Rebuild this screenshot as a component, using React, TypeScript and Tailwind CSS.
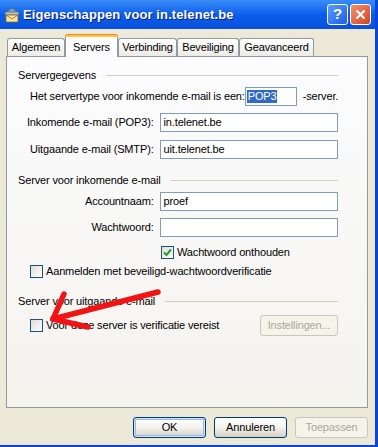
import React from "react";

const font = { fontFamily: '"Liberation Sans", Arial, sans-serif' };

function Input({ value, w = "w-[179px]" }: { value?: string; w?: string }) {
  return (
    <div className={`${w} h-[19px] border border-[#7F9DB9] bg-white flex items-center px-[3px] text-[11px] text-black`}>
      {value}
    </div>
  );
}

function Check({ checked }: { checked?: boolean }) {
  return (
    <div className="w-[13px] h-[13px] border border-[#1C5180] bg-gradient-to-br from-[#DCDCD7] to-[#FFFFFF] flex items-center justify-center shrink-0">
      {checked && (
        <svg width="9" height="9" viewBox="0 0 9 9">
          <path d="M1 4.5 L3.5 7 L8 1.5" stroke="#21A121" strokeWidth="2" fill="none" />
        </svg>
      )}
    </div>
  );
}

function Section({ title, className = "" }: { title: string; className?: string }) {
  return (
    <div className={`flex items-center h-[14px] ${className}`}>
      <span className="text-[11px] text-black whitespace-nowrap">{title}</span>
      <div className="flex-1 ml-[10px] h-px bg-[#D0D0BF]" />
    </div>
  );
}

function Btn({ label, def, disabled, w = "w-[73px]" }: { label: string; def?: boolean; disabled?: boolean; w?: string }) {
  const border = disabled ? "border-[#C9C7BA]" : "border-[#003C74]";
  return (
    <div
      className={`${w} h-[21px] rounded-[3px] border ${border} flex items-center justify-center text-[11px] ${
        disabled ? "text-[#ACA899] bg-[#F5F4EA]" : "text-black bg-gradient-to-b from-[#FFFFFF] via-[#F4F3EE] to-[#D6D0C5]"
      } ${def ? "shadow-[inset_0_0_0_1px_#CEE7FF,inset_0_0_0_2px_#98B8EA]" : ""}`}
    >
      {label}
    </div>
  );
}

function Tab({ label, w, selected }: { label: string; w: string; selected?: boolean }) {
  if (selected) {
    return (
      <div
        className={`${w} h-[23px] relative z-10 -mb-px rounded-t-[3px] border-x border-[#919B9C] bg-[#FCFCFE] flex items-start justify-center pt-[4px] text-[11px] text-black`}
      >
        <div className="absolute left-[-1px] right-[-1px] top-0 h-[3px] rounded-t-[3px] bg-[#FFC83C] border-t border-[#E68B2C]" />
        <span className="mt-[1px]">{label}</span>
      </div>
    );
  }
  return (
    <div
      className={`${w} h-[18px] rounded-t-[3px] border border-b-0 border-[#919B9C] bg-gradient-to-b from-[#FFFFFF] to-[#ECEBE6] flex items-center justify-center text-[11px] text-black`}
    >
      {label}
    </div>
  );
}

export default function App() {
  return (
    <div className="relative w-[378px] h-[447px] overflow-hidden bg-[#0A45D8] tracking-[-0.15px]" style={font}>
      <div className="flex flex-col w-[375px] h-[445px]">
        {/* title bar */}
        <div className="h-[29px] shrink-0 bg-gradient-to-b from-[#3A8CFA] via-[#0A5EEA] to-[#0850DC] flex items-center pl-[3px] pr-[4px]">
          <svg width="18" height="16" viewBox="0 0 18 16" className="mr-[2px] mt-[1px]">
            <path d="M2 6 L9 1 L16 6 Z" fill="#8AA3B8" stroke="#4A6378" strokeWidth="0.8" />
            <rect x="2" y="5" width="14" height="3" fill="#B8C8D6" stroke="#4A6378" strokeWidth="0.8" />
            <rect x="3" y="8" width="12" height="7" fill="#FBE69A" stroke="#8C6A1C" strokeWidth="0.8" />
            <path d="M3 8 L9 12 L15 8" fill="none" stroke="#8C6A1C" strokeWidth="0.8" />
          </svg>
          <span className="text-white font-bold text-[13px] tracking-[0.1px] [text-shadow:1px_1px_0_#0A1E80]">
            Eigenschappen voor in.telenet.be
          </span>
          <div className="flex-1" />
          <div className="w-[21px] h-[21px] rounded-[3px] border border-white bg-gradient-to-br from-[#5A9CFF] to-[#1E5EE0] flex items-center justify-center text-white font-bold text-[15px] mr-[2px]">
            ?
          </div>
          <div className="w-[21px] h-[21px] rounded-[3px] border border-white bg-gradient-to-br from-[#F09070] to-[#D8401A] flex items-center justify-center">
            <svg width="11" height="11" viewBox="0 0 11 11">
              <path d="M1.5 1.5 L9.5 9.5 M9.5 1.5 L1.5 9.5" stroke="white" strokeWidth="2.2" />
            </svg>
          </div>
        </div>

        {/* body */}
        <div className="flex-1 bg-[#ECE9D8] flex flex-col pl-[6px] pr-[7px]">
          {/* tabs */}
          <div className="flex items-end h-[27px] pl-px">
            <Tab label="Algemeen" w="w-[58px]" />
            <Tab label="Servers" w="w-[53px]" selected />
            <Tab label="Verbinding" w="w-[59px]" />
            <Tab label="Beveiliging" w="w-[62px]" />
            <Tab label="Geavanceerd" w="w-[75px]" />
          </div>

          {/* panel */}
          <div className="h-[352px] border border-[#919B9C] bg-gradient-to-b from-[#FCFCFE] to-[#F4F3EE] flex flex-col pl-[11px] pr-[29px]">
            <Section title="Servergegevens" className="mt-[11px]" />
            <div className="flex items-center h-[19px] mt-[5px] pl-[12px] text-[11px] text-black whitespace-nowrap">
              <span className="w-[217px] whitespace-nowrap">Het servertype voor inkomende e-mail is een:</span>
              <div className="w-[52px] h-[19px] border border-[#7F9DB9] bg-white flex items-center pl-[1px] shrink-0">
                <span className="bg-[#316AC5] text-white px-[1px] leading-[13px]">POP3</span>
              </div>
              <span className="ml-[6px] whitespace-nowrap">-server.</span>
            </div>
            <div className="flex items-center mt-[7px]">
              <span className="w-[142px] text-right text-[11px] text-black pr-[6px] whitespace-nowrap">Inkomende e-mail (POP3):</span>
              <Input value="in.telenet.be" />
            </div>
            <div className="flex items-center mt-[8px]">
              <span className="w-[142px] text-right text-[11px] text-black pr-[6px] whitespace-nowrap">Uitgaande e-mail (SMTP):</span>
              <Input value="uit.telenet.be" />
            </div>

            <Section title="Server voor inkomende e-mail" className="mt-[14px]" />
            <div className="flex items-center mt-[5px]">
              <span className="w-[142px] text-right text-[11px] text-black pr-[6px]">Accountnaam:</span>
              <Input value="proef" />
            </div>
            <div className="flex items-center mt-[7px]">
              <span className="w-[142px] text-right text-[11px] text-black pr-[6px]">Wachtwoord:</span>
              <Input />
            </div>
            <div className="flex items-center mt-[9px] pl-[143px] gap-[3px] text-[11px] text-black h-[13px]">
              <Check checked />
              <span>Wachtwoord onthouden</span>
            </div>
            <div className="flex items-center mt-[6px] pl-[12px] gap-[3px] text-[11px] text-black h-[13px]">
              <Check />
              <span>Aanmelden met beveiligd-wachtwoordverificatie</span>
            </div>

            <Section title="Server voor uitgaande e-mail" className="mt-[16px]" />
            <div className="flex items-center mt-[7px] pl-[12px] gap-[3px] text-[11px] text-black h-[20px]">
              <Check />
              <span>Voor deze server is verificatie vereist</span>
              <div className="flex-1" />
              <Btn label="Instellingen..." disabled w="w-[78px]" />
            </div>
          </div>

          {/* bottom buttons */}
          <div className="flex justify-end gap-[8px] mt-[9px]">
            <Btn label="OK" def />
            <Btn label="Annuleren" />
            <Btn label="Toepassen" disabled />
          </div>
        </div>
      </div>

      {/* red arrow annotation */}
      <svg className="absolute left-0 top-0 pointer-events-none" width="378" height="447">
        <g stroke="#F21414" strokeWidth="5.5" strokeLinecap="round" fill="none">
          <path d="M158 292 L53 319" />
          <path d="M64 294 L53 319" />
          <path d="M53 319 L88 327" />
        </g>
      </svg>
    </div>
  );
}
